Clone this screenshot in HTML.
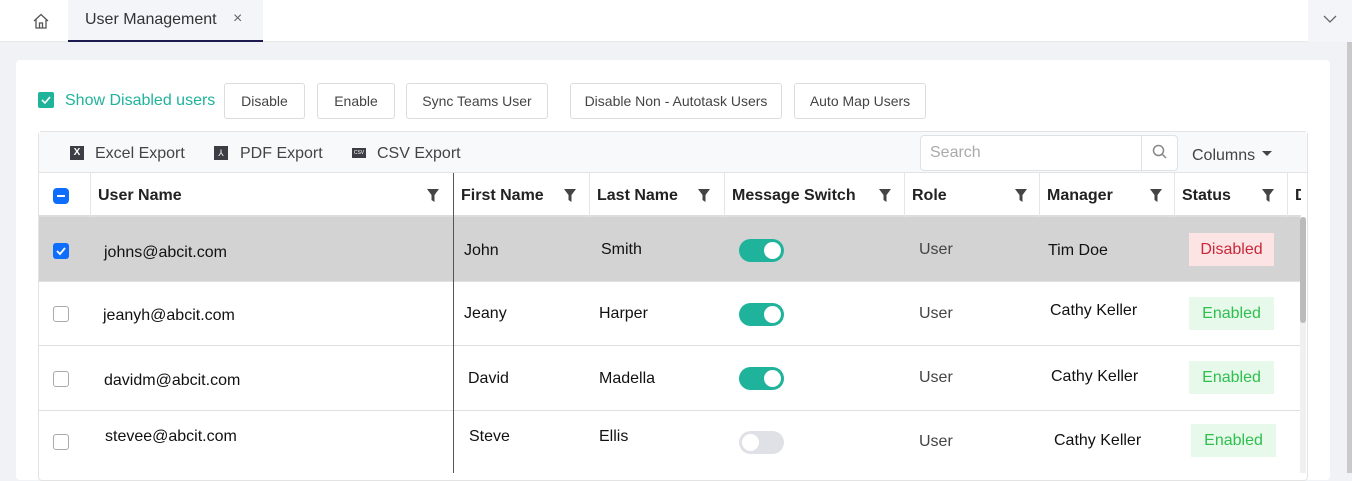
<!DOCTYPE html>
<html><head><meta charset="utf-8"><style>
*{box-sizing:border-box;margin:0;padding:0}
body{width:1352px;height:473px;overflow:hidden;background:#f0f2f5;font-family:"Liberation Sans",Arial,sans-serif;position:relative;color:#222}
.a{position:absolute;white-space:nowrap}
.btn{position:absolute;top:83px;height:36px;border:1px solid #dcdcdc;border-radius:3px;background:#fff;font-size:14px;color:#444;text-align:center;line-height:34px}
.th{position:absolute;top:173px;height:44px;font-weight:bold;font-size:16px;line-height:46px;padding-left:7px;color:#222;border-left:1px solid #e6e6e6}
.flt{position:absolute;top:16px;width:12px;height:13px}
.row{position:absolute;left:39px;width:1262px;border-bottom:1px solid #e0e0e0;background:#fff}
.t{position:absolute;font-size:16px;color:#111;white-space:nowrap;line-height:20px}
.tg{position:absolute;left:739px;width:45px;height:23px;border-radius:12px;background:#1fb39b}
.tg:after{content:"";position:absolute;right:3px;top:3px;width:17px;height:17px;border-radius:50%;background:#fff}
.tg.off{background:#dfe1e6}.tg.off:after{right:auto;left:3px}
.bd{position:absolute;width:85px;height:33px;font-size:16px;line-height:33px;text-align:center}
.en{background:#e6f9ea;color:#2fbf4f}
.cb{position:absolute;left:53px;width:16px;height:16px;border:1px solid #aaa;border-radius:3px;background:#fff}
</style></head><body>
<div class="a" style="left:0;top:0;width:1352px;height:42px;background:#fff;border-bottom:1px solid #e8e8e8"></div>
<svg class="a" style="left:32px;top:12px" width="18" height="18" viewBox="0 0 18 18"><path d="M2 9 L9 2.5 L16 9 M4 7.5 V16 H14 V7.5 M7.5 16 V11 H10.5 V16" fill="none" stroke="#555" stroke-width="1.3"/></svg>
<div class="a" style="left:68px;top:0;width:195px;height:42px;background:#f4f5f9;border-bottom:2px solid #1c1a4e"></div>
<div class="a" style="left:85px;top:11px;font-size:16px;color:#333">User Management</div>
<div class="a" style="left:233px;top:10px;font-size:16px;color:#666">×</div>
<div class="a" style="left:1308px;top:0;width:44px;height:42px;background:#f4f5f9"></div>
<svg class="a" style="left:1322px;top:14px" width="16" height="10"><path d="M2 2 L8 8 L14 2" fill="none" stroke="#666" stroke-width="1.3"/></svg>
<div class="a" style="left:1347px;top:42px;width:5px;height:431px;background:#c9c9c9"></div>
<div class="a" style="left:16px;top:60px;width:1314px;height:420px;background:#fff;border-radius:4px"></div>
<div class="a" style="left:38px;top:92px;width:16px;height:16px;background:#1fb39b;border-radius:2px"></div>
<svg class="a" style="left:38px;top:92px" width="16" height="16"><path d="M4 8 L7 11 L12 5" fill="none" stroke="#fff" stroke-width="1.6"/></svg>
<div class="a" style="left:65px;top:92px;font-size:16px;color:#1fb39b">Show Disabled users</div>
<div class="btn" style="left:224px;width:81px">Disable</div>
<div class="btn" style="left:317px;width:78px">Enable</div>
<div class="btn" style="left:406px;width:142px">Sync Teams User</div>
<div class="btn" style="left:570px;width:212px">Disable Non - Autotask Users</div>
<div class="btn" style="left:794px;width:132px">Auto Map Users</div>
<div class="a" style="left:38px;top:131px;width:1270px;height:350px;border:1px solid #e3e3e3;border-radius:4px;background:#fff"></div>
<div class="a" style="left:39px;top:132px;width:1268px;height:41px;background:#f8f9fa;border-bottom:1px solid #e3e3e3"></div>
<div class="a" style="left:70px;top:146px;width:14px;height:14px;background:#3b3f45;color:#fff;font-size:10px;line-height:14px;text-align:center;font-weight:bold">X</div>
<div class="a" style="left:95px;top:145px;font-size:16px;color:#444">Excel Export</div>
<div class="a" style="left:214px;top:146px;width:14px;height:14px;background:#3b3f45;color:#fff;font-size:9px;line-height:14px;text-align:center">⅄</div>
<div class="a" style="left:240px;top:145px;font-size:16px;color:#444">PDF Export</div>
<div class="a" style="left:352px;top:148px;width:14px;height:10px;background:#3b3f45;color:#fff;font-size:5px;line-height:10px;text-align:center">CSV</div>
<div class="a" style="left:377px;top:145px;font-size:16px;color:#444">CSV Export</div>
<div class="a" style="left:920px;top:135px;width:258px;height:36px;border:1px solid #dee2e6;border-radius:4px;background:#fff"></div>
<div class="a" style="left:1141px;top:135px;width:1px;height:36px;background:#dee2e6"></div>
<div class="a" style="left:930px;top:144px;font-size:16px;color:#aaa">Search</div>
<svg class="a" style="left:1152px;top:144px" width="16" height="16"><circle cx="6.5" cy="6.5" r="5" fill="none" stroke="#888" stroke-width="1.5"/><path d="M10 10 L14 14" stroke="#888" stroke-width="1.5"/></svg>
<div class="a" style="left:1192px;top:147px;font-size:16px;color:#444">Columns</div>
<svg class="a" style="left:1262px;top:151px" width="10" height="6"><path d="M0 0 H10 L5 5Z" fill="#444"/></svg>
<div class="a" style="left:39px;top:173px;width:1262px;height:44px;background:#fff;border-bottom:2px solid #ddd"></div>
<div class="a" style="left:53px;top:188px;width:16px;height:16px;background:#0d6efd;border-radius:4px"></div>
<div class="a" style="left:57px;top:195px;width:8px;height:2px;background:#fff"></div>
<div class="th" style="left:90px;width:363px">User Name<svg class="flt" style="left:336px" viewBox="0 0 12 13"><path d="M0 0 H12 L7.5 6 V13 L4.5 11 V6Z" fill="#444"/></svg></div>
<div class="th" style="left:453px;width:136px;border-left:1px solid #555">First Name<svg class="flt" style="left:110px" viewBox="0 0 12 13"><path d="M0 0 H12 L7.5 6 V13 L4.5 11 V6Z" fill="#444"/></svg></div>
<div class="th" style="left:589px;width:135px">Last Name<svg class="flt" style="left:108px" viewBox="0 0 12 13"><path d="M0 0 H12 L7.5 6 V13 L4.5 11 V6Z" fill="#444"/></svg></div>
<div class="th" style="left:724px;width:180px">Message Switch<svg class="flt" style="left:154px" viewBox="0 0 12 13"><path d="M0 0 H12 L7.5 6 V13 L4.5 11 V6Z" fill="#444"/></svg></div>
<div class="th" style="left:904px;width:135px">Role<svg class="flt" style="left:110px" viewBox="0 0 12 13"><path d="M0 0 H12 L7.5 6 V13 L4.5 11 V6Z" fill="#444"/></svg></div>
<div class="th" style="left:1039px;width:135px">Manager<svg class="flt" style="left:110px" viewBox="0 0 12 13"><path d="M0 0 H12 L7.5 6 V13 L4.5 11 V6Z" fill="#444"/></svg></div>
<div class="th" style="left:1174px;width:113px">Status<svg class="flt" style="left:87px" viewBox="0 0 12 13"><path d="M0 0 H12 L7.5 6 V13 L4.5 11 V6Z" fill="#444"/></svg></div>
<div class="th" style="left:1287px;width:14px;overflow:hidden">D</div>
<div class="row" style="top:217px;height:65px;background:#d3d3d3"></div>
<div class="row" style="top:282px;height:64px"></div>
<div class="row" style="top:346px;height:65px"></div>
<div class="row" style="top:411px;height:62px;border:none"></div>
<div class="a" style="left:453px;top:173px;width:1px;height:300px;background:#555"></div>
<div class="a" style="left:1300px;top:217px;width:6px;height:256px;background:#f0f0f0"></div>
<div class="a" style="left:1300px;top:217px;width:6px;height:106px;background:#bbb;border-radius:3px"></div>
<div class="a" style="left:53px;top:243px;width:16px;height:16px;background:#0d6efd;border-radius:3px"></div>
<svg class="a" style="left:53px;top:243px" width="16" height="16"><path d="M4 8 L7 11 L12 5" fill="none" stroke="#fff" stroke-width="1.8"/></svg>
<div class="t" style="left:104px;top:243px">johns@abcit.com</div>
<div class="t" style="left:464px;top:241px">John</div>
<div class="t" style="left:601px;top:240px">Smith</div>
<div class="tg" style="top:239px"></div>
<div class="t" style="left:919px;top:240px;color:#444">User</div>
<div class="t" style="left:1048px;top:241px">Tim Doe</div>
<div class="bd" style="left:1189px;top:233px;background:#fde4e4;color:#c8283a">Disabled</div>
<div class="cb" style="top:306px"></div>
<div class="t" style="left:103px;top:306px">jeanyh@abcit.com</div>
<div class="t" style="left:464px;top:304px">Jeany</div>
<div class="t" style="left:599px;top:304px">Harper</div>
<div class="tg" style="top:303px"></div>
<div class="t" style="left:919px;top:304px;color:#444">User</div>
<div class="t" style="left:1050px;top:301px">Cathy Keller</div>
<div class="bd en" style="left:1189px;top:297px">Enabled</div>
<div class="cb" style="top:371px"></div>
<div class="t" style="left:104px;top:371px">davidm@abcit.com</div>
<div class="t" style="left:468px;top:369px">David</div>
<div class="t" style="left:599px;top:369px">Madella</div>
<div class="tg" style="top:367px"></div>
<div class="t" style="left:919px;top:368px;color:#444">User</div>
<div class="t" style="left:1051px;top:367px">Cathy Keller</div>
<div class="bd en" style="left:1189px;top:361px">Enabled</div>
<div class="cb" style="top:434px"></div>
<div class="t" style="left:105px;top:427px">stevee@abcit.com</div>
<div class="t" style="left:469px;top:427px">Steve</div>
<div class="t" style="left:599px;top:427px">Ellis</div>
<div class="tg off" style="top:431px"></div>
<div class="t" style="left:919px;top:432px;color:#444">User</div>
<div class="t" style="left:1054px;top:431px">Cathy Keller</div>
<div class="bd en" style="left:1191px;top:424px">Enabled</div>
</body></html>
